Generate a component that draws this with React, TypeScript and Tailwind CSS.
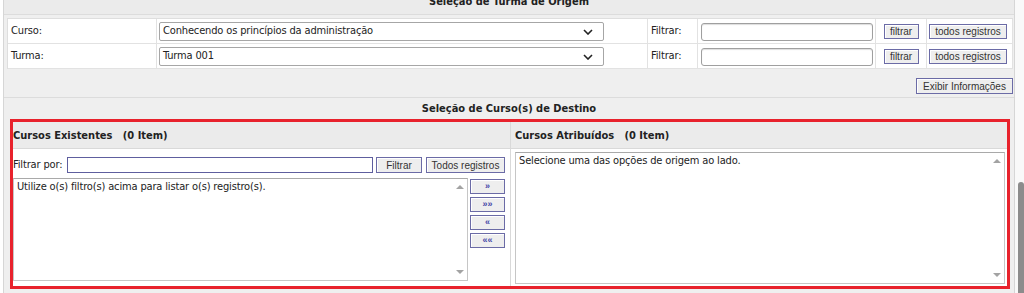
const tahoma = "font-['DejaVu_Sans_Condensed','DejaVu_Sans',sans-serif] font-stretch-condensed";
const arial = "font-['Liberation_Sans',Arial,sans-serif]";

function Btn({ label, className }: { label: string; className?: string }) {
  return (
    <button
      className={`h-[15px] border border-[#6b6ba6] bg-[#eeeeee] shadow-[inset_1px_1px_0_#ffffff] text-[10px] leading-[13px] tracking-normal text-[#333] ${arial} ${className ?? ""}`}
    >
      {label}
    </button>
  );
}

function ArrowBtn({ label }: { label: string }) {
  return (
    <button className={`w-[35px] h-[15px] border border-[#6b6ba6] bg-[#eeeeee] shadow-[inset_1px_1px_0_#ffffff] text-[9px] leading-[13px] font-bold tracking-normal text-[#4646a8] ${arial}`}>
      {label}
    </button>
  );
}

function Chevron() {
  return (
    <svg width="10" height="6" viewBox="0 0 10 6" className="mr-[10px]">
      <path d="M1 1 L5 5 L9 1" fill="none" stroke="#222" strokeWidth="1.6" />
    </svg>
  );
}

function ListBox({ text, className }: { text: string; className?: string }) {
  return (
    <div className={`relative bg-white border border-[#c6c6c6] border-t-[#a9a9a9] ${className ?? ""}`}>
      <div className="pl-[3px] pt-[1px] leading-[14px]">{text}</div>
      <span className="absolute right-[3px] top-[6px] w-0 h-0 border-x-[4px] border-x-transparent border-b-[4px] border-b-[#a3a3a3]" />
      <span className="absolute right-[3px] bottom-[6px] w-0 h-0 border-x-[4px] border-x-transparent border-t-[4px] border-t-[#a3a3a3]" />
    </div>
  );
}

const rows = [
  { label: "Curso:", value: "Conhecendo os princípios da administração" },
  { label: "Turma:", value: "Turma 001" },
];

export default function App() {
  return (
    <div className={`w-[1024px] h-[293px] overflow-hidden bg-white flex text-[11px] tracking-[-0.15px] text-[#222] ${tahoma}`}>
      <div className="w-[1015px] h-full pl-[3px]">
        <div className="h-full bg-[#efefef] border-x border-[#d6d6d6] flex flex-col">
          {/* origem */}
          <div className="h-[15px] overflow-hidden border-b border-[#dcdcdc] bg-[#ebebeb] text-center font-bold tracking-normal">
            <div className="-mt-[5px] leading-[14px]">Seleção de Turma de Origem</div>
          </div>
          <div className="mt-[3px] ml-[3px] w-[1006px] border-l border-t border-[#dedede] bg-white grid grid-cols-[149px_491px_50px_178px_51px_86px]">
            {rows.map((r) => (
              <div key={r.label} className="contents">
                <div className="h-[25px] border-r border-b border-[#e2e2e2] flex items-center pl-[3px] pt-[1px]">{r.label}</div>
                <div className="h-[25px] border-r border-b border-[#e2e2e2] flex items-center pl-[2px] pt-[1px]">
                  <div className="w-[445px] h-[19px] border border-[#a6a6a6] rounded-[2px] bg-white flex items-center justify-between pl-[3px]">
                    <span>{r.value}</span>
                    <Chevron />
                  </div>
                </div>
                <div className="h-[25px] border-r border-b border-[#e2e2e2] flex items-center pl-[3px] pt-[1px]">Filtrar:</div>
                <div className="h-[25px] border-r border-b border-[#e2e2e2] flex items-center pl-[3px] pt-[1px]">
                  <div className="w-[172px] h-[18px] border border-[#9f9f9f] rounded-[3px] bg-white shadow-[inset_0_1px_1px_#dddddd]" />
                </div>
                <div className="h-[25px] border-r border-b border-[#e2e2e2] flex items-center justify-center">
                  <Btn label="filtrar" className="w-[35px]" />
                </div>
                <div className="h-[25px] border-r border-b border-[#e2e2e2] flex items-center pl-[2px]">
                  <Btn label="todos registros" className="w-[78px]" />
                </div>
              </div>
            ))}
          </div>
          <div className="flex justify-end pr-[1px] mt-[9px]">
            <Btn label="Exibir Informações" className="w-[97px] h-[16px]" />
          </div>
          {/* destino */}
          <div className="mt-[3px] h-[22px] border-t border-[#dcdcdc] flex items-center justify-center pt-[1px] font-bold tracking-normal">
            Seleção de Curso(s) de Destino
          </div>
          <div className="ml-[6px] w-[1000px] h-[170px] border-[3px] border-[#e8222c] bg-white grid grid-cols-[497px_497px] grid-rows-[27px_1fr]">
            <div className="bg-[#ebebeb] border-b border-[#d9d9d9] flex items-center pt-[2px] font-bold tracking-normal">
              Cursos Existentes&nbsp;&nbsp;&nbsp;(0 Item)
            </div>
            <div className="bg-[#ebebeb] border-b border-l border-[#d9d9d9] flex items-center pl-[4px] pt-[2px] font-bold tracking-normal">
              Cursos Atribuídos&nbsp;&nbsp;&nbsp;(0 Item)
            </div>
            <div className="flex flex-col">
              <div className="mt-[8px] flex items-center">
                <span className="w-[54px]">Filtrar por:</span>
                <div className="w-[306px] h-[16px] border border-[#5e5e9e] bg-white" />
                <Btn label="Filtrar" className="ml-[3px] w-[46px] h-[16px]" />
                <Btn label="Todos registros" className="ml-[4px] w-[79px] h-[16px]" />
              </div>
              <div className="mt-[4px] flex">
                <ListBox text="Utilize o(s) filtro(s) acima para listar o(s) registro(s)." className="w-[455px] h-[103px]" />
                <div className="ml-[2px] flex flex-col gap-[3px] pt-[1px]">
                  <ArrowBtn label="»" />
                  <ArrowBtn label="»»" />
                  <ArrowBtn label="«" />
                  <ArrowBtn label="««" />
                </div>
              </div>
            </div>
            <div className="border-l border-[#d9d9d9] pl-[4px] pr-[2px] pt-[3px]">
              <ListBox text="Selecione uma das opções de origem ao lado." className="w-[490px] h-[132px]" />
            </div>
          </div>
        </div>
      </div>
      <div className="w-[9px] h-full bg-[#f9f9f9] flex flex-col">
        <div className="h-[182px]" />
        <div className="flex-1 ml-[3px] bg-[#8c8c8c] rounded-t-[3px]" />
      </div>
    </div>
  );
}
